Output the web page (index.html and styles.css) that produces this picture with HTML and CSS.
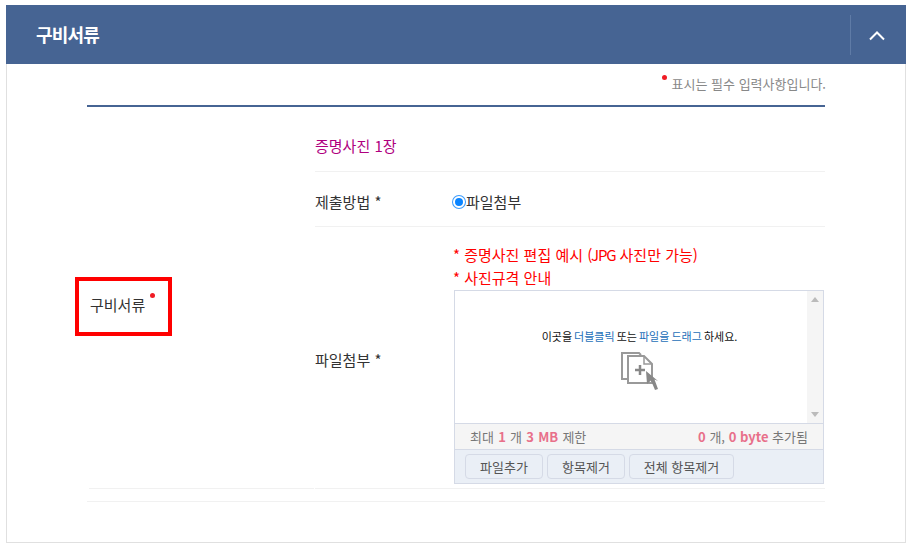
FILE: index.html
```html
<!DOCTYPE html>
<html lang="ko">

<head>
    <meta charset="UTF-8">
    <meta name="viewport" content="width=device-width, initial-scale=1.0">
    <title>구비서류</title>
    <link rel="stylesheet" href="styles.css">
</head>

<body>
    <section class="panel">
        <header class="panel-head">
            <h2 class="panel-title">구비서류</h2>
            <button class="panel-toggle" aria-label="접기">
                <svg width="16" height="10" viewBox="0 0 16 10">
                    <path d="M1 8.500 L8 1.500 L15 8.500" fill="none" stroke="#fff" stroke-width="2"/>
                </svg>
            </button>
        </header>

        <p class="req-note"><span class="dot"></span>표시는 필수 입력사항입니다.</p>

        <div class="form">
            <div class="form-side">
                <div class="side-label">구비서류<span class="dot"></span></div>
            </div>

            <div class="form-main">
                <div class="row row-title">증명사진 1장</div>

                <div class="row row-method">
                    <div class="row-label">제출방법 *</div>
                    <label class="radio"><span class="radio-mark"></span>파일첨부</label>
                </div>

                <div class="row row-file">
                    <div class="row-label">파일첨부 *</div>
                    <div class="row-value">
                        <p class="guide">* 증명사진 편집 예시 <span class="guide-en">(JPG</span> 사진만 가능)</p>
                        <p class="guide">* 사진규격 안내</p>

                        <!-- 업로드 박스 -->
                        <div class="uploader">
                            <div class="drop">
                                <div class="drop-body">
                                    <p class="drop-text">이곳을 <em>더블클릭</em> 또는 <em>파일을 드래그</em> 하세요.</p>
                                    <svg class="drop-icon" width="40" height="42" viewBox="0 0 40 42">
                                        <path d="M7 28 H2 V2 H19 L21 4" fill="none" stroke="#999" stroke-width="2"/>
                                        <path d="M8 5 H24 L32 13 V32 H8 Z" fill="#fff" stroke="#999" stroke-width="2"/>
                                        <path d="M24 5 V13 H32" fill="none" stroke="#999" stroke-width="1.500"/>
                                        <path d="M20 14 V24 M15 19 H25" stroke="#888" stroke-width="2.500"/>
                                        <path d="M26 20 L27 33 L31 29.500 L35 39 L38 38 L34.500 28.500 L38 30 Z" fill="#888"/>
                                    </svg>
                                </div>
                                <div class="scroll">
                                    <span class="arrow-up"></span>
                                    <span class="arrow-down"></span>
                                </div>
                            </div>
                            <div class="status">
                                <span class="status-limit">최대 <b>1</b> 개 <b>3 MB</b> 제한</span>
                                <span><b>0</b> 개, <b>0 byte</b> 추가됨</span>
                            </div>
                            <div class="actions">
                                <button class="btn btn-add">파일추가</button>
                                <button class="btn btn-del">항목제거</button>
                                <button class="btn btn-all">전체 항목제거</button>
                            </div>
                        </div>
                    </div>
                </div>
            </div>
        </div>
    </section>
</body>

</html>
```

FILE: styles.css
```css
body {
    margin: 0;
    padding: 5px 5px 0 6px;
    background-color: #fff;
    color: #333;
    font-family: "Noto Sans CJK KR", "Liberation Sans", sans-serif;
    font-size: 15px;
}

.panel {
    height: 538px;
    box-sizing: border-box;
    border: 1px solid #e0e0e0;
    border-top: none;
}

.panel-head {
    display: flex;
    align-items: center;
    justify-content: space-between;
    height: 59px;
    margin: 0 -1px;
    background-color: #466493;
}

.panel-title {
    margin: 0 0 2px 30px;
    color: #fff;
    font-size: 18px;
    font-weight: 700;
    letter-spacing: -0.8px;
}

.panel-toggle {
    display: flex;
    align-items: center;
    justify-content: center;
    box-sizing: border-box;
    width: 56px;
    height: 40px;
    padding: 2px 3px 0 0;
    background: none;
    border: none;
    border-left: 1px solid #5f7ba6;
    cursor: pointer;
}

.req-note {
    height: 41px;
    box-sizing: border-box;
    margin: 0 79px 0 0;
    padding-top: 10px;
    color: #888;
    font-size: 13px;
    line-height: 20px;
    text-align: right;
}

.dot {
    display: inline-block;
    width: 5px;
    height: 5px;
    margin-right: 5px;
    border-radius: 50%;
    background-color: #f01c24;
    vertical-align: 9px;
}

.form {
    display: flex;
    margin: 0 80px;
    padding-bottom: 12px;
    border-top: 2px solid #466493;
    border-bottom: 1px solid #f1f1f1;
}

.form-side {
    display: flex;
    align-items: center;
    box-sizing: border-box;
    flex: 0 0 225px;
    height: 382px;
    margin: 0 1px 0 2px;
    border-bottom: 1px solid #f1f1f1;
}

.side-label {
    display: flex;
    align-items: center;
    box-sizing: border-box;
    width: 97px;
    height: 59px;
    margin: 17px 0 0 -14px;
    padding: 0 0 3px 11px;
    border: 4px solid #f00;
    color: #333;
    white-space: nowrap;
}

.side-label .dot {
    margin: 0 0 0 5px;
    position: relative;
    top: -9px;
}

.form-main {
    flex: 1;
}

.row {
    display: flex;
    align-items: center;
    border-bottom: 1px solid #f1f1f1;
    box-sizing: border-box;
}

.row-title {
    height: 65px;
    padding-top: 12px;
    color: #b0007f;
}

.row-method {
    height: 55px;
    padding-top: 4px;
}

.row-file {
    height: 262px;
}

.row-label {
    flex: 0 0 138px;
    padding-top: 4px;
}

.row-method .row-label {
    padding-top: 0;
}

.radio {
    display: flex;
    align-items: center;
}

.radio-mark {
    width: 8px;
    height: 8px;
    margin: 1px 1px 0 0;
    border: 2px solid #fff;
    border-radius: 50%;
    background-color: #0a84ff;
    box-shadow: 0 0 0 1px #3a9bfc;
}

.row-value {
    flex: 1;
    align-self: flex-end;
    padding-bottom: 4px;
}

.guide {
    margin: 0;
    color: #f00;
    line-height: 23px;
}

.guide-en {
    letter-spacing: -1.200px;
}

.uploader {
    box-sizing: border-box;
    width: 370px;
    margin: 1px 0 0 1px;
    border: 1px solid #d5dae6;
    font-size: 13px;
}

.drop {
    display: flex;
    height: 132px;
    border-bottom: 1px solid #d5dae6;
}

.drop-body {
    flex: 1;
    padding-left: 17px;
    text-align: center;
}

.drop-text {
    margin: 36px 0 6px;
    color: #111;
    font-size: 11px;
    line-height: 18px;
    word-spacing: -1px;
}

.drop-text em {
    color: #1d6fb8;
    font-style: normal;
}

.drop-icon {
    display: block;
    margin: 0 auto;
}

.scroll {
    display: flex;
    flex-direction: column;
    align-items: center;
    justify-content: space-between;
    box-sizing: border-box;
    width: 16px;
    padding: 6px 0;
    background-color: #f5f5f5;
}

.arrow-up {
    border: 4px solid transparent;
    border-top: none;
    border-bottom: 5px solid #bbb;
}

.arrow-down {
    border: 4px solid transparent;
    border-bottom: none;
    border-top: 5px solid #bbb;
}

.status {
    display: flex;
    justify-content: space-between;
    align-items: center;
    height: 25px;
    padding: 0 15px;
    background-color: #f5f5f5;
    border-bottom: 1px solid #d5dae6;
    color: #777;
}

.status-limit {
    word-spacing: 0.600px;
}

.status b {
    color: #e8708a;
}

.actions {
    display: flex;
    align-items: center;
    gap: 4px;
    height: 33px;
    padding-left: 10px;
    background-color: #eaeff6;
}

.btn {
    height: 25px;
    padding: 0;
    background-color: #eaeff6;
    border: 1px solid #d5dae6;
    border-radius: 4px;
    color: #555;
    font-family: inherit;
    font-size: 13px;
    cursor: pointer;
}

.btn-add,
.btn-del {
    width: 78px;
}

.btn-all {
    width: 105px;
}
```
